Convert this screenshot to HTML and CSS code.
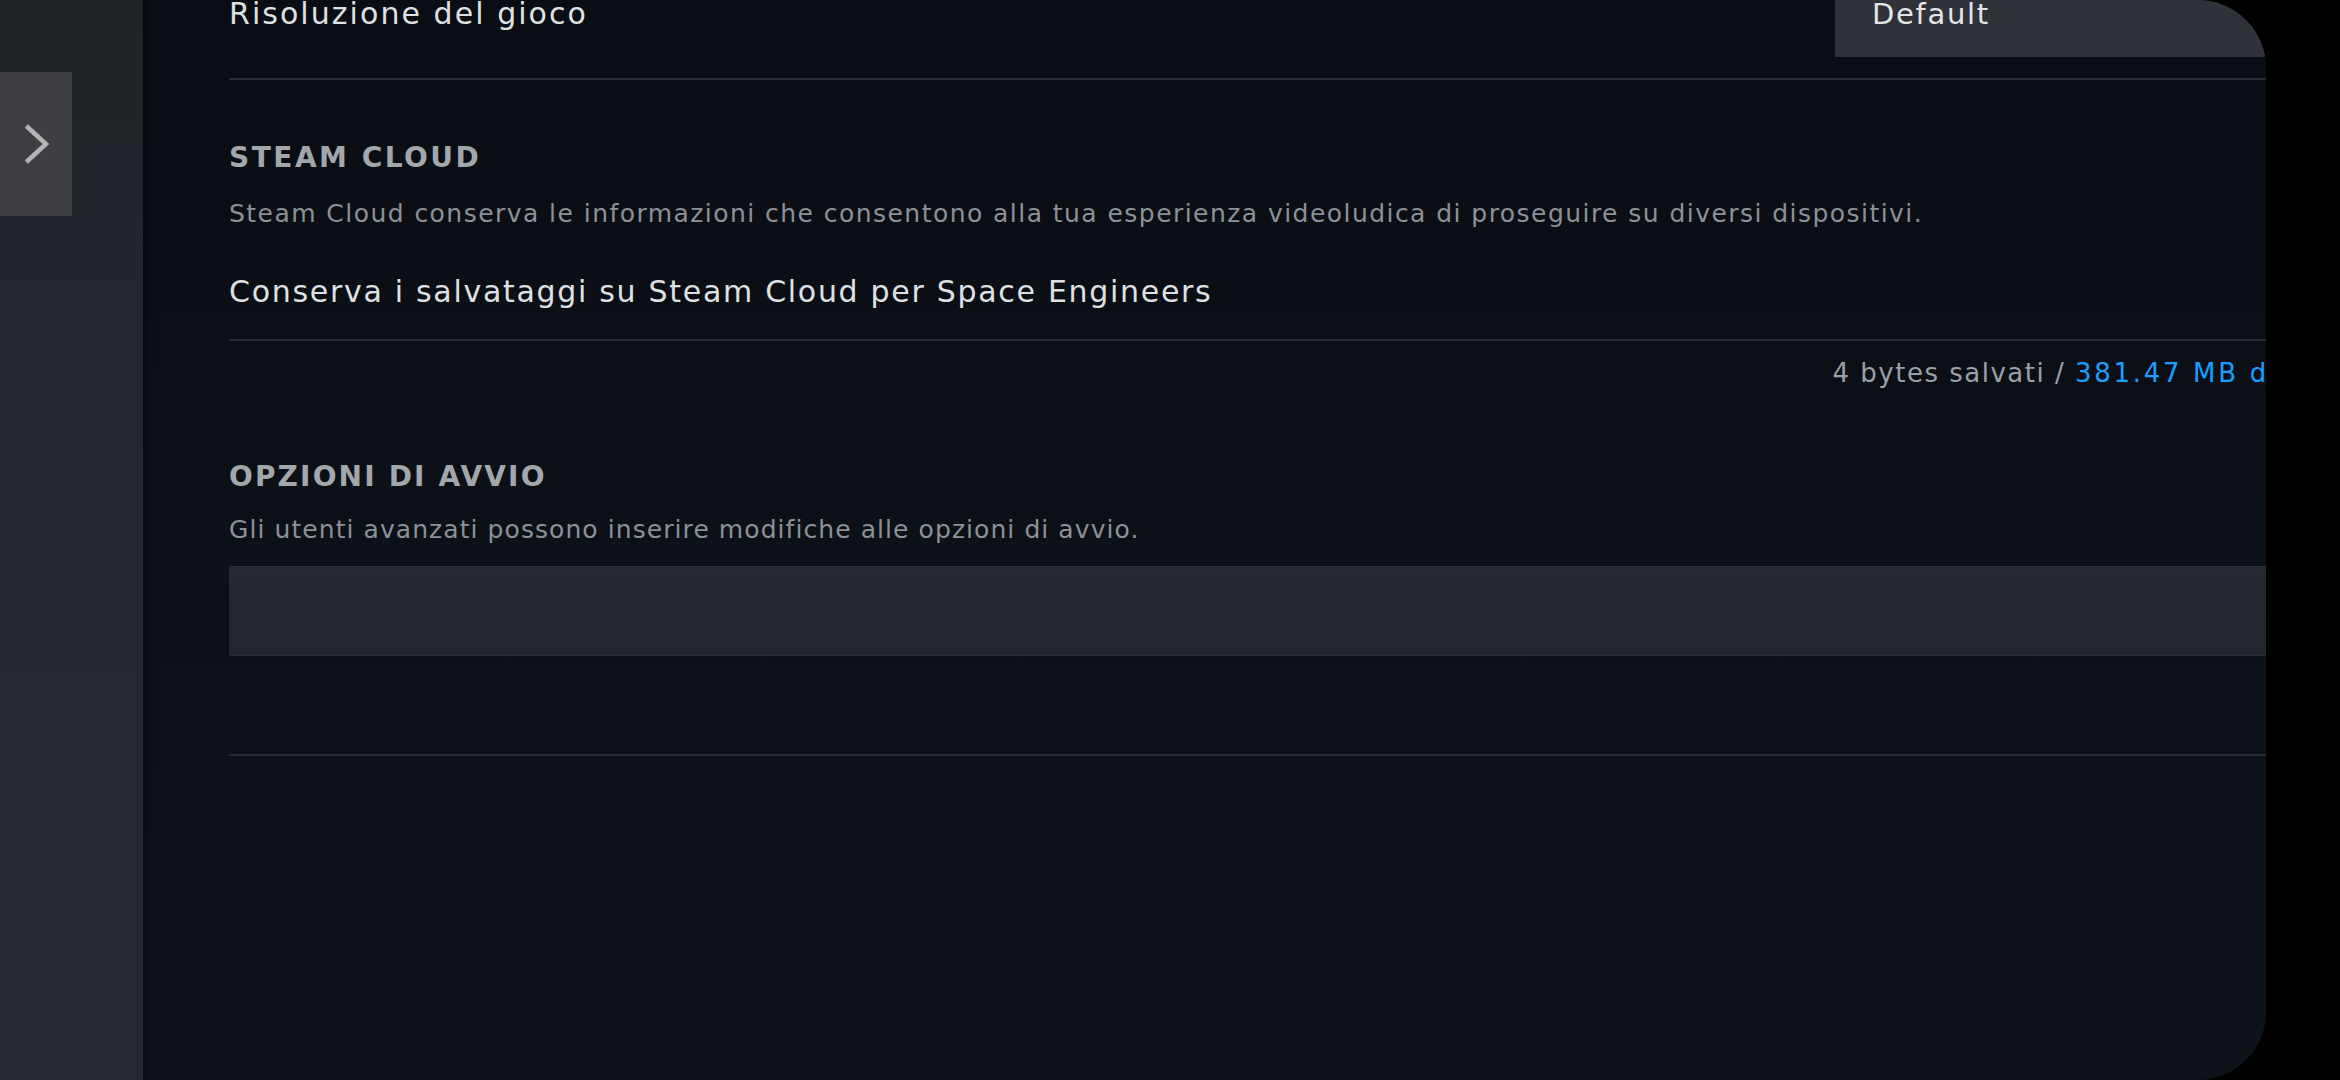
FILE: index.html
```html
<!DOCTYPE html>
<html lang="it">
<head>
<meta charset="utf-8">
<title>Proprietà - Space Engineers</title>
<link rel="stylesheet" href="styles.css">
</head>
<body>
  <aside class="sidebar">
    <div class="expand">
      <svg class="chevron" width="72" height="144" viewBox="0 0 72 144" aria-hidden="true">
        <polyline points="28,55.5 46,72 28,88.5" fill="none" stroke="#b4b4b4" stroke-width="4.5" stroke-linecap="square" stroke-linejoin="miter"/>
      </svg>
    </div>
  </aside>
  <main class="panel">
    <div class="content">
      <div class="res-row">
        <span class="label res-label">Risoluzione del gioco</span>
        <div class="dropdown">Default</div>
      </div>

      <section class="group cloud">
        <h2 class="heading">STEAM CLOUD</h2>
        <p class="desc">Steam Cloud conserva le informazioni che consentono alla tua esperienza videoludica di proseguire su diversi dispositivi.</p>
        <div class="toggle-row">
          <span class="label">Conserva i salvataggi su Steam Cloud per Space Engineers</span>
        </div>
        <div class="usage">4 bytes salvati / <span class="accent">381.47 MB disponibili</span></div>
      </section>

      <section class="group launch">
        <h2 class="heading">OPZIONI DI AVVIO</h2>
        <p class="desc">Gli utenti avanzati possono inserire modifiche alle opzioni di avvio.</p>
        <div class="launch-input"></div>
      </section>
    </div>
  </main>
</body>
</html>
```

FILE: styles.css
```css
* {
  box-sizing: border-box;
  margin: 0;
  padding: 0;
}

html, body {
  width: 2340px;
  height: 1080px;
}

body {
  background: #000;
  font-family: "DejaVu Sans", "Noto Sans", sans-serif;
  display: flex;
  overflow: hidden;
}

.sidebar {
  width: 143px;
  flex: none;
  background: linear-gradient(#1f2227 0%, #24272d 35%, #26292f 100%);
  padding-top: 72px;
}

.expand {
  width: 72px;
  height: 144px;
  background: #3e3f42;
}

.chevron {
  display: block;
}

.panel {
  width: 2123px;
  flex: none;
  background: linear-gradient(#0a0d13 0%, #0c1017 50%, #0e131a 100%);
  border-radius: 0 68px 68px 0;
  overflow: hidden;
  padding-left: 86px;
  box-shadow: inset 8px 0 8px -6px rgba(0, 0, 0, 0.45);
}

.content {
  width: 2182px;
}

.label {
  font-size: 30px;
  line-height: 34px;
  letter-spacing: 1.7px;
  color: #dee1e4;
  white-space: nowrap;
}

.res-row {
  display: flex;
  justify-content: space-between;
  align-items: flex-start;
  margin-top: -26px;
  height: 106px;
  border-bottom: 2px solid #292c33;
}

.res-row .res-label {
  margin-top: 23px;
  letter-spacing: 2.05px;
}

.dropdown {
  width: 576px;
  height: 83px;
  background: #2f3239;
  padding: 23px 37px 0;
  font-size: 29px;
  line-height: 34px;
  letter-spacing: 1.7px;
  color: #e2e4e7;
}

.group {
  display: flex;
  flex-direction: column;
}

.heading {
  font-size: 28px;
  line-height: 34px;
  font-weight: 700;
  letter-spacing: 2.5px;
  color: #a2a7ae;
}

.desc {
  font-size: 25px;
  line-height: 30px;
  letter-spacing: 1.45px;
  color: #8b9199;
  white-space: nowrap;
}

.cloud {
  padding-top: 61px;
}

.cloud .desc {
  margin-top: 24px;
}

.toggle-row {
  margin-top: 46px;
  padding-bottom: 29.5px;
  border-bottom: 2px solid #292c33;
  display: flex;
  align-items: center;
}

.usage {
  margin-top: 16.5px;
  font-size: 26px;
  line-height: 32px;
  letter-spacing: 1.5px;
  color: #9aa0a7;
  text-align: right;
  white-space: nowrap;
}

.accent {
  color: #1a9fff;
  letter-spacing: 2.7px;
}

.launch {
  padding-top: 71px;
  padding-bottom: 98.5px;
  border-bottom: 2px solid #262a31;
}

.launch .heading {
  letter-spacing: 2.15px;
}

.launch .desc {
  margin-top: 21px;
  letter-spacing: 1.07px;
}

.launch-input {
  margin-top: 20.5px;
  height: 90px;
  background: linear-gradient(#25282f, #23262d);
  border-top: 1px solid #2b2f37;
  border-bottom: 1px solid #2a2e35;
}
```
